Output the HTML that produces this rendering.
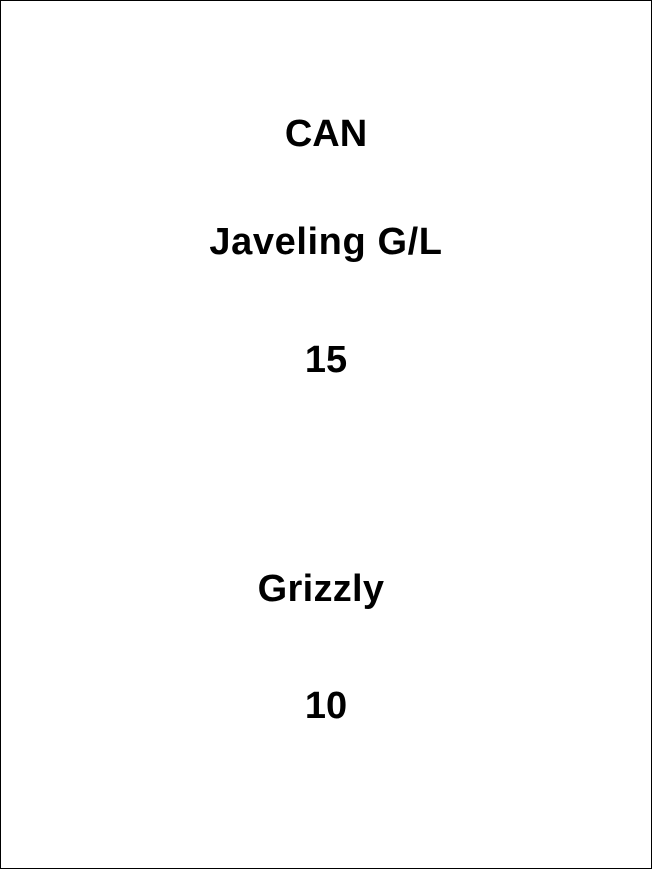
<!DOCTYPE html>
<html><head><style>
html,body{margin:0;padding:0;background:#fff}
.b{position:absolute;left:0;top:0;width:650px;height:867px;border:1px solid #000}
.t{position:absolute;left:1px;width:650px;text-align:center;font:bold 38px/1 "Liberation Sans",sans-serif;color:#000;white-space:nowrap}
</style></head><body>
<div class="b"></div>
<div class="t" style="top:115px">CAN</div>
<div class="t" style="top:223px;letter-spacing:0.6px">Javeling G/L</div>
<div class="t" style="top:341px">15</div>
<div class="t" style="top:570px;left:-4px;letter-spacing:0.3px">Grizzly</div>
<div class="t" style="top:687px">10</div>
</body></html>
